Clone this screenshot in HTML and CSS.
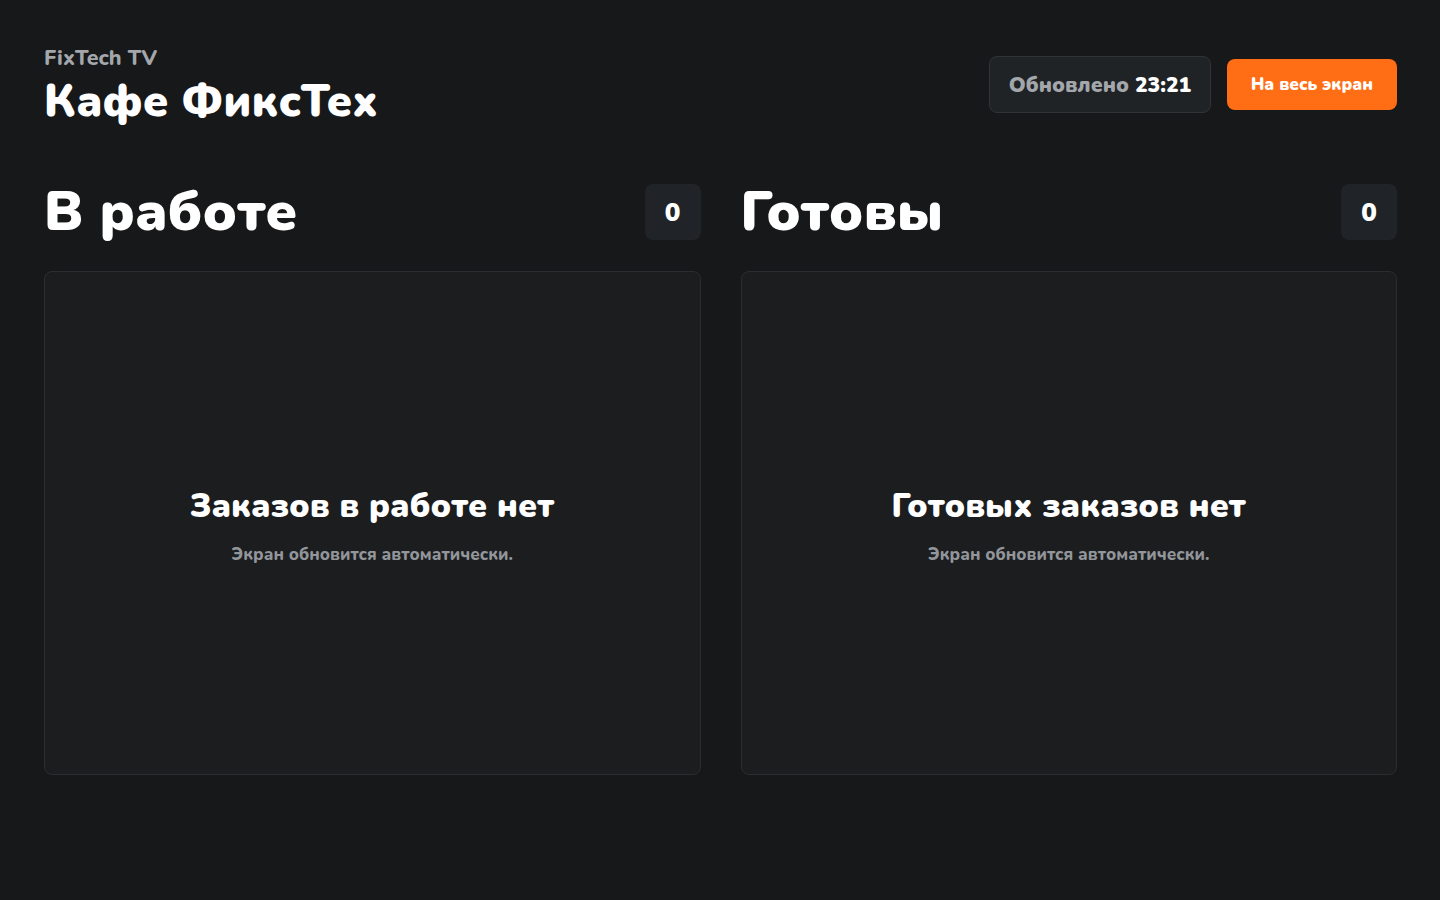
FILE: index.html
```html
<!DOCTYPE html>
<html lang="ru">
<head>
<meta charset="utf-8">
<title>Кафе ФиксТех</title>
<link rel="stylesheet" href="styles.css">
</head>
<body>
<div class="page">
  <header class="header">
    <div class="brand">
      <div class="brand-sub">FixTech TV</div>
      <h1 class="brand-title">Кафе ФиксТех</h1>
    </div>
    <div class="actions">
      <div class="updated">Обновлено <span class="time">23:21</span></div>
      <button class="fullscreen">На весь экран</button>
    </div>
  </header>
  <main class="columns">
    <section class="column">
      <div class="column-head">
        <h2 class="column-title">В работе</h2>
        <div class="count">0</div>
      </div>
      <div class="card">
        <div class="empty-title">Заказов в работе нет</div>
        <div class="empty-sub">Экран обновится автоматически.</div>
      </div>
    </section>
    <section class="column">
      <div class="column-head">
        <h2 class="column-title">Готовы</h2>
        <div class="count">0</div>
      </div>
      <div class="card">
        <div class="empty-title">Готовых заказов нет</div>
        <div class="empty-sub">Экран обновится автоматически.</div>
      </div>
    </section>
  </main>
</div>
</body>
</html>
```

FILE: styles.css
```css
* { box-sizing: border-box; }
html, body {
  margin: 0;
  padding: 0;
  background: #17181a;
  color: #ffffff;
  font-family: Nunito, "Noto Sans", "Open Sans", sans-serif;
}
.page {
  padding: 44px 43px 0 44px;
}
.header {
  display: flex;
  justify-content: space-between;
  align-items: center;
}
.brand-sub {
  font-size: 21.5px;
  font-weight: 800;
  color: #a3a7ab;
  line-height: 28px;
}
.brand-title {
  margin: 3px 0 0;
  font-size: 45px;
  font-weight: 900;
  line-height: 54px;
}
.actions {
  display: flex;
  align-items: center;
  gap: 16px;
  margin-top: -4px;
}
.updated {
  height: 57px;
  width: 222px;
  display: flex;
  align-items: center;
  justify-content: center;
  background: #202326;
  border: 1px solid #303337;
  border-radius: 8px;
  font-size: 21px;
  font-weight: 900;
  color: #a3a7ab;
  gap: 6px;
}
.updated .time { color: #ffffff; }
.fullscreen {
  height: 51px;
  width: 170px;
  background: #ff6d14;
  color: #ffffff;
  border: none;
  border-radius: 8px;
  font-family: inherit;
  font-size: 17px;
  font-weight: 900;
}
.columns {
  display: grid;
  grid-template-columns: 1fr 1fr;
  gap: 40px;
  margin-top: 55px;
}
.column-head {
  display: flex;
  justify-content: space-between;
  align-items: center;
  height: 56px;
}
.column-title {
  margin: 0;
  font-size: 56px;
  font-weight: 900;
  line-height: 56px;
}
.count {
  width: 56px;
  height: 56px;
  border-radius: 8px;
  background: #202428;
  display: flex;
  align-items: center;
  justify-content: center;
  font-size: 26px;
  font-weight: 900;
}
.card {
  margin-top: 31px;
  height: 504px;
  padding-top: 4px;
  background: #1c1d1f;
  border: 1px solid #2b2d30;
  border-radius: 8px;
  display: flex;
  flex-direction: column;
  align-items: center;
  justify-content: center;
  gap: 17px;
}
.empty-title {
  font-size: 33.5px;
  font-weight: 900;
  line-height: 42px;
}
.empty-sub {
  font-size: 17px;
  font-weight: 800;
  color: #92969b;
  line-height: 22px;
}
```
